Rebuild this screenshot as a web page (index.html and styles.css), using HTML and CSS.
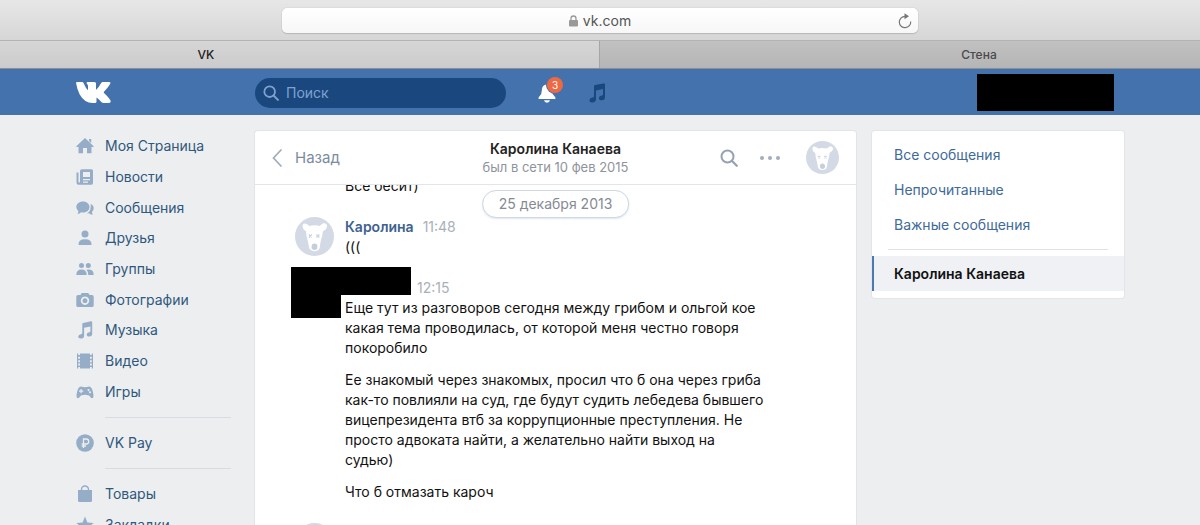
FILE: index.html
```html
<!DOCTYPE html>
<html lang="ru">
<head>
<meta charset="utf-8">
<title>VK</title>
<link rel="stylesheet" href="styles.css">
</head>
<body>
<svg class="sprite" aria-hidden="true">
  <symbol id="dog" viewBox="0 0 40 40">
    <circle cx="20" cy="20" r="20" fill="#d3dae5"/>
    <path fill="#fff" d="M8 7.500Q9.500 6 12 7.200L15 9.200Q20 7.800 25 9.200L29 6.500Q32.500 6 33 9.500Q32 13.500 28.500 14.500Q28.300 20 26.300 25L25.300 31.500Q24.500 35 20 35Q15.500 35 14.500 31.500L13.300 25Q11.300 20 11.300 14.500Q7 12.500 8 7.500Z"/>
    <path stroke="#ccd4df" stroke-width="1.300" d="M14.300 18l3 3m0-3l-3 3M22 18l3 3m0-3l-3 3"/>
    <ellipse cx="20" cy="30.500" rx="3" ry="3.300" fill="#c5cedb"/>
  </symbol>
  <symbol id="note" viewBox="0 0 18 20">
    <path fill="currentColor" d="M6 3.200Q6 2.300 7 2.100L15.500.400Q17 .100 17 1.500V14.300Q17 17.200 13.700 17.300Q10.800 17.300 10.900 14.900Q11.100 12.900 13.700 12.600Q15 12.500 15 11.500V6L8 7.400V16.300Q8 19.300 4.300 19.500Q1.300 19.500 1.500 17Q1.700 14.900 4.500 14.600Q6 14.400 6 13.300Z"/>
  </symbol>
  <symbol id="lens" viewBox="0 0 18 18">
    <circle cx="7.500" cy="7.500" r="6" fill="none" stroke="currentColor" stroke-width="2"/>
    <path d="M12 12l4.800 4.800" stroke="currentColor" stroke-width="2.200" stroke-linecap="round"/>
  </symbol>
</svg>

<div class="page">
  <div class="toolbar">
    <div class="address">
      <span class="address-text">
        <svg class="lock" viewBox="0 0 9 12"><path fill="none" stroke="#999" stroke-width="1.300" d="M2 6V3.500a2.500 2.500 0 0 1 5 0V6"/><rect y="5" width="9" height="6.500" rx="1" fill="#999"/></svg>
        vk.com
      </span>
      <button class="reload" aria-label="Обновить"><svg viewBox="0 0 14 16"><path fill="none" stroke="#777" stroke-width="1.200" d="M12.700 8.500A5.700 5.700 0 1 1 7 3.300"/><path fill="#777" d="M6.500.300L11 3.200L6.500 6.200Z"/></svg></button>
    </div>
  </div>
  <div class="tabs">
    <button class="tab tab-active">VK</button>
    <button class="tab tab-next">Стена</button>
  </div>

  <header class="header">
    <div class="wrap header-row">
      <a class="logo" href="#" aria-label="VK"><svg viewBox="0 0 35 21"><path fill="#fff" d="M.800 0H6Q7.200 0 7.700 1.300Q9.700 6.300 12 8.300V4Q12 2.600 10.700 1.500Q10.300 .200 11.700 0H18.500Q20 0 20 1.500V8Q22.200 6.300 25 1.200Q25.600 0 27 0H33Q35 0 34.300 1.600Q33 4.500 28 9.700Q27.500 10.300 28 10.900Q33 15.500 34.500 18.500Q35.300 21 33 21H27.500Q26.300 21 25.300 20Q22.500 16.500 20.500 15.400V19.500Q20.500 21 19 21H16.500Q8.500 21 3.700 12.500Q1.200 8 .100 1.300Q0 0 .800 0Z"/></svg></a>
      <label class="search"><svg><use href="#lens"/></svg><input type="text" placeholder="Поиск" aria-label="Поиск"></label>
      <button class="bell" aria-label="Уведомления">
        <svg viewBox="0 0 18 20"><path fill="#fff" d="M7.300 1.800Q9 .500 10.700 1.800Q14 3 14 7.500Q14 11.500 16.500 13.300Q18 14.600 17.300 16H.700Q0 14.600 1.500 13.300Q3.800 11.500 3.800 7.500Q3.800 3 7.300 1.800ZM6 17.300H12Q11.500 19.700 9 19.700Q6.500 19.700 6 17.300Z"/></svg>
        <span class="badge">3</span>
      </button>
      <button class="player" aria-label="Музыка"><svg><use href="#note"/></svg></button>
      <div class="profile-mask"></div>
    </div>
  </header>

  <div class="wrap content">
    <nav class="nav">
      <div class="nav-main">
        <a href="#"><svg viewBox="0 0 18 18"><path d="M9 1L17.700 9.300Q17.900 10 17 10H15.500V16.300H11V11H7V16.300H2.500V10H1Q.100 10 .300 9.300ZM13 2h2.200v4L13 4Z"/></svg>Моя Страница</a>
        <a href="#"><svg viewBox="0 0 18 18"><path fill-rule="evenodd" d="M6 1.200H15.500Q17 1.200 17 2.700V15Q17 16.700 15.500 16.700H2.500Q.500 16.700.500 14.500V4.500H2.500V14Q3.300 15 4 14V3Q4 1.200 6 1.200ZM7 4V9H14V4ZM7 11v1.200h7V11ZM7 13.500v1.200h5v-1.200Z"/></svg>Новости</a>
        <a href="#"><svg viewBox="0 0 18 18"><path d="M7 2.500C11 2.500 13.500 5 13.500 8S11 13.500 7 13.500Q6 13.500 5 13.200Q3.500 15 1.500 14.700Q2.500 13.500 2.300 12Q.300 10.500.300 8C.300 5 3 2.500 7 2.500ZM14.700 5Q17.700 6.300 17.700 9.300Q17.700 11.500 16 13Q16 14.500 17 15.500Q14.500 16 13 14.300L10.800 14.500Q15.500 12.500 14.700 5Z"/></svg>Сообщения</a>
        <a href="#"><svg viewBox="0 0 18 18"><circle cx="9" cy="5" r="3.500"/><path d="M2.500 16Q2 10.200 9 10.200T15.500 16Z"/></svg>Друзья</a>
        <a href="#"><svg viewBox="0 0 18 18"><circle cx="5.500" cy="5.500" r="2.500"/><circle cx="12.300" cy="5.500" r="2.500"/><path d="M.300 15Q.300 9.500 5.500 9.500T10.700 15ZM10.500 9.700Q17.700 8.500 17.700 15H12.300Q12.300 11.500 10.500 9.700Z"/></svg>Группы</a>
        <a href="#"><svg viewBox="0 0 18 18"><path fill-rule="evenodd" d="M2 4H4.500L5.700 2H12.300L13.500 4H16Q17.700 4 17.700 5.700V14.500Q17.700 16 16 16H2Q.300 16 .300 14.500V5.700Q.300 4 2 4ZM9 5.500a4.200 4.200 0 1 0 .010 0ZM9 7.300a2.400 2.400 0 1 1-.010 0Z"/></svg>Фотографии</a>
        <a href="#"><svg><use href="#note"/></svg>Музыка</a>
        <a href="#"><svg viewBox="0 0 18 18"><path fill-rule="evenodd" d="M1 1.500H2.200V3H4V1.500H14V3H15.800V1.500H17V16.500H15.800V15H14V16.500H4V15H2.200V16.500H1ZM2.200 4.700v2H4v-2ZM14 4.700v2h1.800v-2ZM2.200 8.200v2H4v-2ZM14 8.200v2h1.800v-2ZM2.200 11.500v2H4v-2ZM14 11.500v2h1.800v-2Z"/></svg>Видео</a>
        <a href="#"><svg viewBox="0 0 18 18"><path fill-rule="evenodd" d="M5 3.500Q9 5 13 3.500Q15.500 3.500 16.700 8T17.300 14.500Q15.500 16.500 14 13.500Q13 11.700 9 11.700T4 13.500Q2.500 16.500.700 14.500Q0 12.500 1.300 8T5 3.500ZM4.500 6v1.500H3v1.200h1.500v1.500h1.200V8.700h1.500V7.500H5.700V6ZM12.500 6a1 1 0 1 0 .010 0ZM14 8.200a1 1 0 1 0 .010 0Z"/></svg>Игры</a>
      </div>
      <div class="nav-group"><a href="#"><svg viewBox="0 0 18 18"><circle cx="9" cy="9" r="8.800"/><path fill="none" stroke="#edeef0" stroke-width="1.300" d="M7.500 14V5H10.200a2.400 2.400 0 0 1 0 5H5.700M5.700 12H10"/></svg>VK Pay</a></div>
      <div class="nav-group">
        <a href="#"><svg viewBox="0 0 18 18"><path d="M2 5H16V15.500Q16 17 14.500 17H3.500Q2 17 2 15.500Z"/><path fill="none" stroke="#96adc8" stroke-width="1.400" d="M5.500 6V4.500a3.500 3.500 0 0 1 7 0V6"/></svg>Товары</a>
        <a href="#"><svg viewBox="0 0 18 18"><path d="M9 .500L11.400 6.400L17.700 6.900L12.900 11L14.400 17.200L9 13.900L3.600 17.200L5.100 11L.300 6.900L6.600 6.400Z"/></svg>Закладки</a>
      </div>
    </nav>

    <main class="chat">
      <div class="chat-head">
        <button class="back"><svg viewBox="0 0 10 18"><path fill="none" stroke="#a0abb8" stroke-width="1.700" stroke-linecap="round" d="M9 1L1.500 9L9 17"/></svg>Назад</button>
        <div class="chat-title"><h1>Каролина Канаева</h1><p>был в сети 10 фев 2015</p></div>
        <div class="chat-tools">
          <button class="find" aria-label="Поиск по сообщениям"><svg><use href="#lens"/></svg></button>
          <button class="more" aria-label="Действия"><svg viewBox="0 0 20 4"><circle cx="2" cy="2" r="2"/><circle cx="10" cy="2" r="2"/><circle cx="18" cy="2" r="2"/></svg></button>
          <svg class="head-avatar"><use href="#dog"/></svg>
        </div>
      </div>
      <div class="feed">
        <span class="date">25 декабря 2013</span>
        <div class="message message-cut"><div></div><p>Все бесит)</p></div>
        <div class="message">
          <svg class="avatar"><use href="#dog"/></svg>
          <div><div class="meta"><a href="#">Каролина</a><time>11:48</time></div><p>(((</p></div>
        </div>
        <div class="message message-masked">
          <div></div>
          <div>
            <div class="meta"><time>12:15</time></div>
            <p>Еще тут из разговоров сегодня между грибом и ольгой кое<br>какая тема проводилась, от которой меня честно говоря<br>покоробило</p>
            <p>Ее знакомый через знакомых, просил что б она через гриба<br>как-то повлияли на суд, где будут судить лебедева бывшего<br>вицепрезидента втб за коррупционные преступления. Не<br>просто адвоката найти, а желательно найти выход на<br>судью)</p>
            <p>Что б отмазать кароч</p>
          </div>
        </div>
        <div class="message"><svg class="avatar"><use href="#dog"/></svg><div></div></div>
      </div>
    </main>

    <aside class="filters">
      <a href="#">Все сообщения</a>
      <a href="#">Непрочитанные</a>
      <a href="#">Важные сообщения</a>
      <hr>
      <a class="current" href="#">Каролина Канаева</a>
    </aside>
  </div>
</div>
</body>
</html>
```

FILE: styles.css
```css
* { box-sizing: border-box; }

body {
  margin: 0;
  background: #edeef0;
  color: #111;
  font: 400 14px/20px Inter, "Liberation Sans", sans-serif;
}

h1, p { margin: 0; }
a { text-decoration: none; }
svg { display: block; flex: none; }
button {
  padding: 0;
  border: 0;
  background: none;
  color: inherit;
  font: inherit;
  cursor: pointer;
}
.sprite { position: absolute; width: 0; height: 0; }

.page {
  display: flex;
  flex-direction: column;
  height: 100vh;
  overflow: hidden;
}
.wrap { width: 100%; max-width: 1048px; margin: 0 auto; }

/* Browser chrome */
.toolbar {
  flex: none;
  display: flex;
  justify-content: center;
  padding: 8px 0 7px;
  border-bottom: 1px solid #b3b3b3;
  background: linear-gradient(#e7e7e7, #d6d6d6);
}
.address {
  display: flex;
  align-items: center;
  width: 53%;
  height: 25px;
  padding: 0 6px 0 20px;
  border-radius: 5px;
  background: linear-gradient(#fff, #f7f7f7);
  box-shadow: 0 0 1px #999, 0 1px 1px #bbb;
}
.address-text {
  flex: 1;
  display: flex;
  align-items: center;
  justify-content: center;
  gap: 5px;
  color: #555;
}
.lock { width: 9px; height: 12px; }
.reload svg { width: 14px; height: 16px; }

.tabs {
  flex: none;
  display: grid;
  grid-template-columns: 1fr 1fr;
  height: 28px;
  border-bottom: 1px solid #8290a4;
}
.tab {
  font-size: 12px;
  font-weight: 500;
  color: #4a4a4a;
  background: linear-gradient(#c1c1c1, #b5b5b5);
}
.tab-active {
  padding-right: 187px;
  border-right: 1px solid #a5a5a5;
  color: #222;
  background: linear-gradient(#d6d6d6, #cbcbcb);
}
.tab-next { padding-left: 158px; }

/* Site header */
.header { flex: none; background: #4472ac; border-top: 1px solid #476f9f; }
.header-row { display: flex; align-items: center; height: 45px; }
.logo { width: 179px; }
.logo svg { width: 35px; height: 21px; }
.search {
  display: flex;
  align-items: center;
  gap: 7px;
  width: 251px;
  height: 30px;
  padding: 0 8px;
  border-radius: 15px;
  background: #1b477f;
  color: #7fa3d0;
}
.search svg { width: 16px; height: 16px; }
.search input {
  flex: 1;
  min-width: 0;
  padding: 0;
  border: 0;
  outline: 0;
  background: none;
  color: #fff;
  font: inherit;
}
.search input::placeholder { color: #7fa3d0; opacity: 1; }
.bell { position: relative; margin-left: 32px; }
.bell svg { width: 18px; height: 20px; }
.badge {
  position: absolute;
  top: -6px;
  right: -7px;
  width: 16px;
  border-radius: 8px;
  background: #ee6843;
  box-shadow: 0 0 0 1px #4472ac;
  color: #fff;
  font-size: 10px;
  line-height: 16px;
}
.player { margin-left: 32px; color: #1b477f; }
.player svg { width: 18px; height: 20px; }
.profile-mask { width: 137px; height: 37px; margin: 0 10px 0 auto; background: #000; }

.content {
  flex: 1;
  min-height: 0;
  display: grid;
  grid-template-columns: 155px minmax(0, 1fr) 252px;
  align-items: start;
  padding-top: 16px;
}

/* Left navigation */
.nav-main { display: grid; grid-auto-rows: 1fr; height: 276px; }
.nav a {
  display: flex;
  align-items: center;
  gap: 11px;
  color: #2f587d;
}
.nav svg { width: 18px; height: 18px; color: #96adc8; fill: #96adc8; }
.nav-group { margin: 10px 0 0 29px; padding-top: 9px; border-top: 1px solid #d8dce2; }
.nav-group a { height: 31px; margin-left: -29px; }

/* Conversation */
.chat {
  display: flex;
  flex-direction: column;
  align-self: stretch;
  min-height: 0;
  margin: 0 16px 0 24px;
  border-radius: 3px 3px 0 0;
  background: #fff;
  box-shadow: 0 0 0 1px #e1e4e9;
}
.chat-head {
  flex: none;
  display: grid;
  grid-template-columns: 1fr auto 1fr;
  align-items: center;
  height: 54px;
  padding: 0 17px;
  border-bottom: 1px solid #e2e5e9;
}
.back { display: flex; align-items: center; gap: 13px; color: #7c8b9d; font-size: 15px; }
.back svg { width: 10px; height: 18px; }
.chat-title { text-align: center; color: #8e949b; }
.chat-title h1 { font-size: 14px; line-height: 18px; font-weight: 600; color: #222; }
.chat-title p { font-size: 13px; line-height: 18px; }
.chat-tools { display: flex; align-items: center; justify-content: flex-end; color: #96a2b3; }
.find svg { width: 18px; height: 18px; }
.more { margin: 0 26px 0 22px; }
.more svg { width: 20px; height: 4px; fill: #a2aebd; }
.head-avatar { width: 33px; height: 33px; }

.feed { position: relative; flex: 1; min-height: 0; overflow: hidden; }
.date {
  position: absolute;
  z-index: 1;
  top: 5px;
  left: 50%;
  transform: translateX(-50%);
  padding: 3px 16px;
  border: 1px solid #cfd7e2;
  border-radius: 15px;
  background: #fff;
  box-shadow: 0 1px 2px #e1e6ee;
  color: #858b93;
  white-space: nowrap;
}
.message {
  position: relative;
  display: grid;
  grid-template-columns: 39px 1fr;
  gap: 11px;
  padding: 0 40px;
  margin-bottom: 21px;
}
.message-cut { margin-top: -9px; }
.avatar { width: 39px; height: 39px; }
.message p + p { margin-top: 12px; }
.meta { display: flex; gap: 9px; color: #a9b0b9; }
.meta a { color: #40628f; font-weight: 600; }
.message-masked .meta { padding-left: 72px; }
.message-masked::before,
.message-masked::after {
  content: "";
  position: absolute;
  top: -11px;
  left: 36px;
  background: #000;
}
.message-masked::before { width: 120px; height: 28px; }
.message-masked::after { width: 50px; height: 51px; }

/* Message filters */
.filters {
  padding: 6px 0 7px;
  border-radius: 3px;
  background: #fff;
  box-shadow: 0 0 0 1px #e3e5e9;
}
.filters a {
  display: flex;
  align-items: center;
  height: 35px;
  padding-left: 22px;
  color: #406a98;
}
.filters hr { height: 1px; margin: 7px 16px 6px; border: 0; background: #dfe2e6; }
.filters .current {
  padding-left: 20px;
  border-left: 2px solid #4d79b2;
  background: #f0f1f5;
  color: #111;
  font-weight: 600;
}
```
